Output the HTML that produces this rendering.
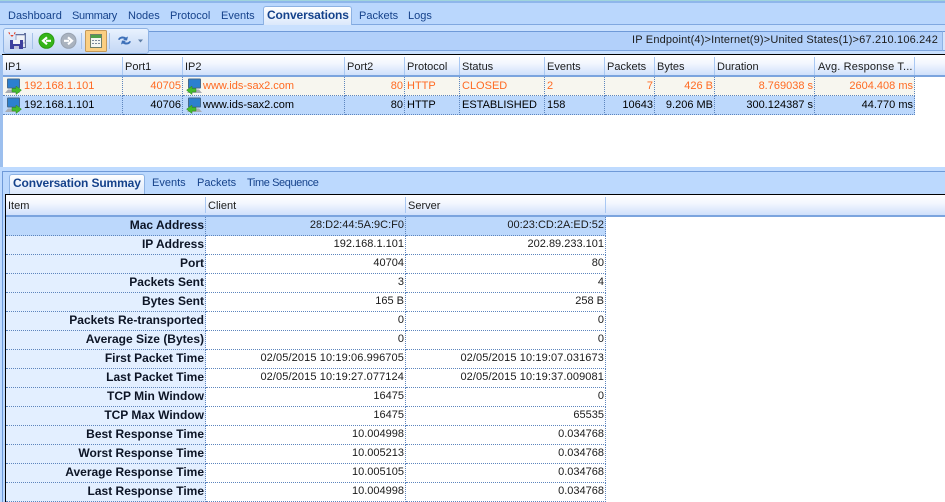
<!DOCTYPE html>
<html><head><meta charset="utf-8">
<style>
*{box-sizing:border-box}
html,body{margin:0;padding:0;width:945px;height:502px;overflow:hidden;background:#bfdbff}
body{position:relative;font:11px/15px "Liberation Sans",sans-serif;color:#000}
.a{position:absolute}
.t{position:absolute;white-space:nowrap;line-height:15px;color:#1c1c1c}
.tab{position:absolute;white-space:nowrap;color:#15428b;line-height:15px}
.b{font-size:12px;font-weight:bold;letter-spacing:-.12px}
.hd{position:absolute;background:linear-gradient(#fff,#f3f7fe 40%,#cfe0fb);border-bottom:2px solid #7ba4de}
.sep{position:absolute;width:1px;background:#a9c8f3}
table{position:absolute;border-collapse:separate;border-spacing:0;table-layout:fixed}
td{padding:0 1px 0 2px;height:19px;white-space:nowrap;overflow:hidden;border-right:1px dotted #5d85bd;border-bottom:1px dotted #5d85bd;line-height:16px;vertical-align:top}
#up td{padding-top:1px}
.r{text-align:right}
.o td{background:#f7f6ef;color:#ff6a22}
.s td{background:#bcd8fc;color:#000}
#sum td{background:#fff;text-align:right;color:#1a1a1a}
#sum td:first-child{background:#e3efff;font-size:12px;font-weight:bold;text-align:right;color:#0c1425}
#sum tr.s td{background:#bcd8fc}
#sum tr.s td:first-child{background:#bcd8fc}
.d{letter-spacing:.11px}
</style></head><body>
<svg width="0" height="0" style="position:absolute"><defs>
<g id="pcR"><path d="M3 11.500h9l3 3.500H0z" fill="#a9adb3"/><rect x="2" y="0.500" width="13" height="10" rx="1" fill="#46698c"/><rect x="3" y="1.500" width="11" height="8" fill="#2c80cf"/><path d="M7 10.500h4V8l5.500 4.200L11 16.500V14H7z" fill="#45bb2c" stroke="#2a8a1c" stroke-width=".5"/></g>
<g id="pcL"><path d="M4 11.500h9l3 3.500H1z" fill="#a9adb3"/><rect x="2" y="0.500" width="13" height="10" rx="1" fill="#46698c"/><rect x="3" y="1.500" width="11" height="8" fill="#2c80cf"/><path d="M10 10.500H6V8L.5 12.200 6 16.500V14h4z" fill="#45bb2c" stroke="#2a8a1c" stroke-width=".5"/></g>
</defs></svg>

<!-- top band -->
<div class="a" style="left:0;top:0;width:945px;height:1px;background:#9fd4dc"></div>
<div class="a" style="left:0;top:1px;width:945px;height:2px;background:#8fb6ea"></div>
<div class="a" style="left:0;top:3px;width:945px;height:21px;background:#bad7fd"></div>
<div class="a" style="left:0;top:24px;width:945px;height:1px;background:#80a8e0"></div>
<div class="a" style="left:0;top:25px;width:945px;height:30px;background:#c9e0fe"></div>

<div class="tab" style="left:8px;top:9px">Dashboard</div>
<div class="tab" style="left:72px;top:9px;letter-spacing:-.3px">Summary</div>
<div class="tab" style="left:128px;top:9px">Nodes</div>
<div class="tab" style="left:170px;top:9px">Protocol</div>
<div class="tab" style="left:221px;top:9px">Events</div>
<div class="a" style="left:263px;top:6px;width:89px;height:19px;background:linear-gradient(#fff,#dbe8fb);border:1px solid #8db2e3;border-bottom:0;border-radius:3px 3px 0 0"></div>
<div class="tab b" style="left:267px;top:8px">Conversations</div>
<div class="tab" style="left:359px;top:9px">Packets</div>
<div class="tab" style="left:408px;top:9px">Logs</div>

<!-- breadcrumb -->
<div class="a" style="left:148px;top:31px;width:794px;height:20px;background:#b2d0fa;border-top:1px solid #6f9ad8;border-bottom:1px solid #7ea6df"></div>
<div class="a" style="left:942px;top:31px;width:3px;height:20px;background:#d5e6fd;border-top:1px solid #6f9ad8;border-bottom:1px solid #7ea6df;border-left:1px solid #8fb3e4"></div>
<div class="t d" style="right:7px;top:33px;letter-spacing:.17px">IP Endpoint(4)&gt;Internet(9)&gt;United States(1)&gt;67.210.106.242</div>

<!-- toolbar -->
<div class="a" style="left:3px;top:28px;width:146px;height:26px;background:linear-gradient(#e9f2fe,#d5e4f9 50%,#c4d8f5);border:1px solid #8fb3e4;border-radius:3px"></div>
<svg class="a" style="left:0;top:25px" width="150" height="30">
<path d="M15.500 9.500h9v-1h1v14h-3" fill="#dfe3ee" stroke="#5d6d9c"/><rect x="16" y="10" width="9" height="8" fill="#eef1f6" stroke="#6a7aa8" stroke-width=".6"/><path d="M10 15h13v9H10z" fill="#3d3f9e"/><rect x="13" y="15" width="7" height="4" fill="#f2f2f8"/><rect x="14" y="21" width="5" height="3" fill="#bfc2dc"/><path d="M10 10h4v-2.500l-0 0h2l-4 4.500-4-4.500h2z" fill="#e2442c"/>
<rect x="32" y="8" width="1" height="16" fill="#a6c2e8"/>
<circle cx="46.500" cy="15.800" r="7.500" fill="#35b518" stroke="#2a9a14"/><path d="M51 15.800h-5M47 12.300L43 15.800l4 3.500" fill="none" stroke="#fff" stroke-width="2.200"/>
<circle cx="68.500" cy="15.800" r="7.500" fill="#aab3bf" stroke="#98a2b0"/><path d="M64 15.800h5M68 12.300L72 15.800l-4 3.500" fill="none" stroke="#fff" stroke-width="2.200"/>
<rect x="81" y="8" width="1" height="16" fill="#a6c2e8"/>
<rect x="85.500" y="5.500" width="21" height="21" rx="1" fill="#fbcf82" stroke="#c49a5a"/>
<rect x="90.500" y="9.500" width="11" height="13" fill="#f4f6f2" stroke="#6f7f6a"/><rect x="91" y="10" width="10" height="3" fill="#4fa04a"/><path d="M92 15h2v1h-2zM95 15h2v1h-2zM98 15h2v1h-2zM92 18h2v1h-2zM95 18h2v1h-2zM98 18h2v1h-2z" fill="#7c8a9c"/>
<rect x="109" y="8" width="1" height="16" fill="#a6c2e8"/>
<path d="M118 14.500c1-3 5-4 8-2l2-1-1 4-4-.5 1.500-1c-2-1-4-.5-5 1zM131 16.500c-1 3-5 4-8 2l-2 1 1-4 4 .5-1.500 1c2 1 4 .5 5-1z" fill="#3c6fb8"/>
<path d="M138 14.500h5l-2.500 3z" fill="#5f7fa8"/>
</svg>

<!-- upper pane -->
<div class="a" style="left:3px;top:55px;width:942px;height:112px;background:#fff"></div>
<div class="a" style="left:2px;top:54px;width:943px;height:1px;background:#000"></div>
<div class="a" style="left:0;top:55px;width:3px;height:112px;background:#9cbfee"></div>
<div class="hd" style="left:3px;top:55px;width:942px;height:22px"></div>
<div class="sep" style="left:122px;top:57px;height:18px"></div>
<div class="sep" style="left:182px;top:57px;height:18px"></div>
<div class="sep" style="left:344px;top:57px;height:18px"></div>
<div class="sep" style="left:404px;top:57px;height:18px"></div>
<div class="sep" style="left:459px;top:57px;height:18px"></div>
<div class="sep" style="left:544px;top:57px;height:18px"></div>
<div class="sep" style="left:604px;top:57px;height:18px"></div>
<div class="sep" style="left:654px;top:57px;height:18px"></div>
<div class="sep" style="left:714px;top:57px;height:18px"></div>
<div class="sep" style="left:814px;top:57px;height:18px"></div>
<div class="sep" style="left:914px;top:57px;height:18px"></div>
<div class="t" style="left:5px;top:60px">IP1</div>
<div class="t" style="left:125px;top:60px">Port1</div>
<div class="t" style="left:185px;top:60px">IP2</div>
<div class="t" style="left:347px;top:60px">Port2</div>
<div class="t" style="left:407px;top:60px">Protocol</div>
<div class="t" style="left:462px;top:60px">Status</div>
<div class="t" style="left:547px;top:60px">Events</div>
<div class="t" style="left:607px;top:60px">Packets</div>
<div class="t" style="left:657px;top:60px">Bytes</div>
<div class="t" style="left:717px;top:60px">Duration</div>
<div class="t" style="left:818px;top:60px;letter-spacing:.15px">Avg. Response T...</div>

<table id="up" style="left:3px;top:77px;width:912px">
<colgroup><col style="width:120px"><col style="width:60px"><col style="width:162px"><col style="width:60px"><col style="width:55px"><col style="width:85px"><col style="width:60px"><col style="width:50px"><col style="width:60px"><col style="width:100px"><col style="width:100px"></colgroup>
<tr class="o"><td style="padding-left:21px">192.168.1.101</td><td class="r">40705</td><td style="padding-left:20px">www.ids-sax2.com</td><td class="r">80</td><td>HTTP</td><td>CLOSED</td><td>2</td><td class="r">7</td><td class="r">426 B</td><td class="r">8.769038 s</td><td class="r">2604.408 ms</td></tr>
<tr class="s"><td style="padding-left:21px">192.168.1.101</td><td class="r">40706</td><td style="padding-left:20px">www.ids-sax2.com</td><td class="r">80</td><td>HTTP</td><td>ESTABLISHED</td><td>158</td><td class="r">10643</td><td class="r">9.206 MB</td><td class="r">300.124387 s</td><td class="r">44.770 ms</td></tr>
</table>
<svg class="a" style="left:5px;top:78px" width="17" height="17"><use href="#pcR"/></svg>
<svg class="a" style="left:5px;top:97px" width="17" height="17"><use href="#pcR"/></svg>
<svg class="a" style="left:186px;top:78px" width="17" height="17"><use href="#pcL"/></svg>
<svg class="a" style="left:186px;top:97px" width="17" height="17"><use href="#pcL"/></svg>

<!-- lower pane -->
<div class="a" style="left:0;top:167px;width:945px;height:4px;background:#bfdbff"></div>
<div class="a" style="left:2px;top:171px;width:943px;height:1px;background:#6f9ad8"></div>
<div class="a" style="left:2px;top:172px;width:943px;height:22px;background:#bcd9fe"></div>
<div class="a" style="left:2px;top:171px;width:1px;height:331px;background:#6f9ad8"></div>
<div class="a" style="left:3px;top:172px;width:2px;height:330px;background:#bcd9fe"></div>
<div class="a" style="left:9px;top:174px;width:136px;height:20px;background:linear-gradient(#fff,#dbe8fb);border:1px solid #8db2e3;border-bottom:0;border-radius:3px 3px 0 0"></div>
<div class="tab b" style="left:13px;top:176px">Conversation Summay</div>
<div class="tab" style="left:152px;top:176px">Events</div>
<div class="tab" style="left:197px;top:176px">Packets</div>
<div class="tab" style="left:247px;top:176px;letter-spacing:-.4px">Time Sequence</div>

<div class="a" style="left:5px;top:194px;width:940px;height:308px;background:#fff"></div>
<div class="a" style="left:5px;top:194px;width:940px;height:1px;background:#000"></div>
<div class="a" style="left:5px;top:194px;width:1px;height:308px;background:#000"></div>
<div class="hd" style="left:6px;top:195px;width:939px;height:22px"></div>
<div class="sep" style="left:205px;top:197px;height:16px"></div>
<div class="sep" style="left:405px;top:197px;height:16px"></div>
<div class="sep" style="left:605px;top:197px;height:16px"></div>
<div class="t" style="left:8px;top:199px">Item</div>
<div class="t" style="left:208px;top:199px">Client</div>
<div class="t" style="left:408px;top:199px">Server</div>

<table id="sum" style="left:6px;top:217px;width:600px">
<colgroup><col style="width:200px"><col style="width:200px"><col style="width:200px"></colgroup>
<tr class="s"><td>Mac Address</td><td>28:D2:44:5A:9C:F0</td><td>00:23:CD:2A:ED:52</td></tr>
<tr><td>IP Address</td><td>192.168.1.101</td><td>202.89.233.101</td></tr>
<tr><td>Port</td><td>40704</td><td>80</td></tr>
<tr><td>Packets Sent</td><td>3</td><td>4</td></tr>
<tr><td>Bytes Sent</td><td>165 B</td><td>258 B</td></tr>
<tr><td>Packets Re-transported</td><td>0</td><td>0</td></tr>
<tr><td>Average Size (Bytes)</td><td>0</td><td>0</td></tr>
<tr><td>First Packet Time</td><td class="d">02/05/2015 10:19:06.996705</td><td class="d">02/05/2015 10:19:07.031673</td></tr>
<tr><td>Last Packet Time</td><td class="d">02/05/2015 10:19:27.077124</td><td class="d">02/05/2015 10:19:37.009081</td></tr>
<tr><td>TCP Min Window</td><td>16475</td><td>0</td></tr>
<tr><td>TCP Max Window</td><td>16475</td><td>65535</td></tr>
<tr><td>Best Response Time</td><td>10.004998</td><td>0.034768</td></tr>
<tr><td>Worst Response Time</td><td>10.005213</td><td>0.034768</td></tr>
<tr><td>Average Response Time</td><td>10.005105</td><td>0.034768</td></tr>
<tr><td>Last Response Time</td><td>10.004998</td><td>0.034768</td></tr>
</table>
</body></html>
